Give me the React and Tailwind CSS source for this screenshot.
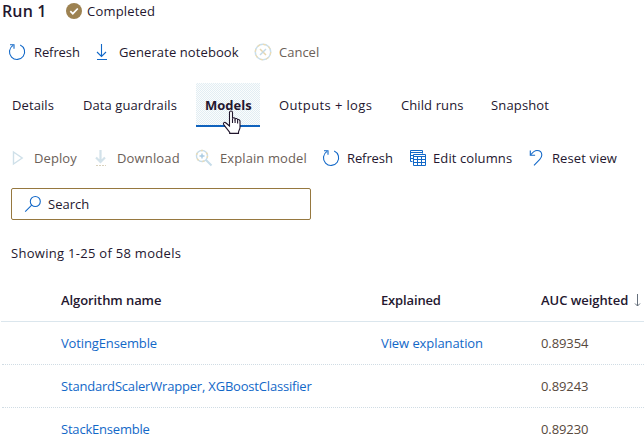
import React from "react";

function RefreshIcon() {
  return (
    <svg width="18" height="18" viewBox="0 0 18 18" fill="none" stroke="#1268c8" strokeWidth="1.1">
      <path d="M12.200 1.900A7.600 7.600 0 1 1 5 2.400" />
      <path d="M2 1.700h4v4" />
    </svg>
  );
}

function DownIcon() {
  return (
    <svg width="14" height="18" viewBox="0 0 14 18" fill="none" stroke="#1268c8" strokeWidth="1.1">
      <path d="M6.500 1v12.500M2 9l4.500 4.500L11 9" />
      <path d="M2 16.500h10" strokeWidth="1" />
    </svg>
  );
}

function DisabledDownIcon() {
  return (
    <svg width="14" height="18" viewBox="0 0 14 18" fill="none" stroke="#d3e2ea">
      <path d="M6.500 1v12M2 8.500l4.500 4.500L11 8.500" strokeWidth="2.200" />
      <path d="M2 16.500h10" stroke="#d9d2bd" strokeDasharray="2 1" />
    </svg>
  );
}

function CancelIcon() {
  return (
    <svg width="18" height="18" viewBox="0 0 18 18" fill="none">
      <circle cx="9" cy="9" r="7.7" stroke="#c9dfec" strokeWidth="1.5" />
      <circle cx="9" cy="9" r="7.7" stroke="#ecdcb4" strokeWidth="1.2" strokeDasharray="3 3" />
      <path d="M6 6l6 6" stroke="#e6d6ae" strokeWidth="1.500" />
      <path d="M12 6l-6 6" stroke="#c3d9e6" strokeWidth="1.500" />
    </svg>
  );
}

function PlayIcon() {
  return (
    <svg width="12" height="16" viewBox="0 0 12 16" fill="none">
      <path d="M1.500 2v12l8.700-6z" stroke="#cfe0e9" strokeWidth="1.400" />
    </svg>
  );
}

function ExplainIcon() {
  return (
    <svg width="18" height="18" viewBox="0 0 18 18" fill="none" stroke="#c6dce9" strokeWidth="1.400">
      <circle cx="7" cy="7" r="5.500" />
      <path d="M11 11l5.500 5.500" strokeWidth="2" />
      <path d="M4.500 7h5M7 4.500v5" stroke="#a9cbe2" />
      <circle cx="7" cy="7" r="5.500" stroke="#ecdcb4" strokeDasharray="2 4" />
    </svg>
  );
}

function ColumnsIcon() {
  return (
    <svg width="18" height="18" viewBox="0 0 18 18" fill="none" stroke="#1268c8" strokeWidth="1">
      <path d="M3.500 12.500h-2v-11h12v3M1 3.500h13M1 6.500h3M1 9.500h3" />
      <path d="M4.500 5.500h12v11h-12zM4 7.500h13M4 10.500h13M4 13.500h13M8.500 7v10M12.500 7v10" />
    </svg>
  );
}

function UndoIcon() {
  return (
    <svg width="14" height="18" viewBox="0 0 14 18" fill="none" stroke="#1268c8" strokeWidth="1.1">
      <path d="M1.300 1.500v4.800h4.800" />
      <path d="M1.600 6C3.500 3.400 5.500 1.500 8 1.500c2.900 0 4.800 2 4.800 4.600 0 1.700-.7 2.900-2 4.200L5 16.300" />
    </svg>
  );
}

function SearchIcon() {
  return (
    <svg width="18" height="18" viewBox="0 0 18 18" fill="none" stroke="#1268c8" strokeWidth="1.1">
      <circle cx="11.300" cy="6.500" r="5" />
      <path d="M7.700 10.200L1.200 16.700" />
    </svg>
  );
}

function HandCursor() {
  return (
    <svg className="absolute left-[26px] top-[27px]" width="20" height="26" viewBox="0 0 20 26">
      <path
        d="M7.500 2.500c0-2 3-2 3 0v6c.5-1.200 2.600-1 2.600.6.600-1 2.500-.7 2.500.9.700-.9 2.400-.4 2.400 1.200v6.200c0 2-1.500 3.200-1.500 5v1H7.700v-1C6.500 20.500 4 17.800 1.800 14.600c-1.200-1.900.7-2.900 2.200-1.600l3.500 3z"
        fill="#fff"
        stroke="#20152c"
        strokeWidth="1.100"
      />
      <path d="M10.500 8.500v4.500M13.100 9.500v3.500M15.600 10.500v3" stroke="#20152c" strokeWidth="1.100" />
    </svg>
  );
}

const models = [
  { name: "VotingEnsemble", spacing: "tracking-[-0.13px]", explained: "View explanation", auc: "0.89354" },
  { name: "StandardScalerWrapper, XGBoostClassifier", spacing: "tracking-[-0.19px]", explained: "", auc: "0.89243" },
  { name: "StackEnsemble", spacing: "tracking-[-0.2px]", explained: "", auc: "0.89230" },
];

export default function App() {
  return (
    <div className="h-[446px] w-[644px] overflow-hidden bg-white font-['Open_Sans','Noto_Sans',sans-serif] text-[13px] leading-5 whitespace-nowrap text-[#24172f]">
      <header className="flex h-[22px] items-center pl-[2px]">
        <h1 className="w-[64px] text-[16px] font-semibold tracking-[0.15px]">Run 1</h1>
        <svg className="mr-[5px]" width="16" height="16" viewBox="0 0 16 16">
          <circle cx="8" cy="8" r="8" fill="#9d8251" />
          <path d="M4.300 8.200l2.500 2.500 5-5.200" fill="none" stroke="#fff" strokeWidth="1.700" />
        </svg>
        <span className="tracking-[0.2px]">Completed</span>
      </header>

      <div className="mt-[20px] grid h-[20px] grid-cols-[26px_61px_24px_135px_25px_1fr] items-center pl-[8px]">
        <RefreshIcon />
        <span className="tracking-[-0.1px]">Refresh</span>
        <DownIcon />
        <span className="tracking-[0.1px]">Generate notebook</span>
        <CancelIcon />
        <span className="text-[#6b6058]">Cancel</span>
      </div>

      <nav className="mt-[21px] grid h-[44px] grid-cols-[71px_113px_64px_19px_122px_90px_1fr] items-center pl-[12px]">
        <span className="tracking-[0.1px]">Details</span>
        <span className="tracking-[0.08px]">Data guardrails</span>
        <div className="relative flex h-full items-center border-b-2 border-[#0f62bd] bg-[#eff5f8] bg-[repeating-conic-gradient(#e2edf3_0_25%,#fbfdfd_0_50%)] bg-[length:2px_2px] pl-[9px] font-bold">
          <span className="pt-[2px]">Models</span>
          <HandCursor />
        </div>
        <span />
        <span className="tracking-[0.38px]">Outputs + logs</span>
        <span className="tracking-[0.1px]">Child runs</span>
        <span className="tracking-[0.15px]">Snapshot</span>
      </nav>

      <div className="mt-[21px] grid h-[20px] grid-cols-[22px_60px_23px_78px_25px_102px_25px_62px_24px_96px_23px_1fr] items-center pl-[12px]">
        <PlayIcon />
        <span className="tracking-[0.1px] text-[#6b6058]">Deploy</span>
        <DisabledDownIcon />
        <span className="tracking-[0.15px] text-[#6b6058]">Download</span>
        <ExplainIcon />
        <span className="tracking-[0.1px] text-[#6b6058]">Explain model</span>
        <RefreshIcon />
        <span className="tracking-[-0.1px]">Refresh</span>
        <ColumnsIcon />
        <span className="tracking-[0.1px]">Edit columns</span>
        <UndoIcon />
        <span className="tracking-[0.1px]">Reset view</span>
      </div>

      <div className="mt-[20px] ml-[11px] flex h-[32px] w-[300px] items-center rounded-[2px] border border-[#96783f] pl-[12px]">
        <SearchIcon />
        <span className="ml-[6px]">Search</span>
      </div>

      <p className="mt-[23px] ml-[11px] h-[20px] tracking-[0.29px]">Showing 1-25 of 58 models</p>

      <div className="ml-[1px]">
        <div className="mt-[16px] grid h-[43px] grid-cols-[320px_160px_1fr] items-center border-b border-[#dbe6ed] pl-[60px] font-semibold">
          <span className="tracking-[-0.08px]">Algorithm name</span>
          <span className="tracking-[-0.15px]">Explained</span>
          <div className="flex items-center">
            <span className="w-[93px] tracking-[-0.05px]">AUC weighted</span>
            <svg width="8" height="14" viewBox="0 0 8 14" fill="none" stroke="#66707c">
              <path d="M3.500 1v12M1 10.500L3.500 13 6 10.500" />
            </svg>
          </div>
        </div>
        {models.map((m) => (
          <div
            key={m.name}
            className="ml-[1px] grid h-[43px] grid-cols-[320px_160px_1fr] items-center border-b border-dotted border-[#d0dce4] pl-[59px] text-[#1268c8]"
          >
            <span className={m.spacing}>{m.name}</span>
            <span className="tracking-[-0.08px]">{m.explained}</span>
            <span className="tracking-[-0.1px] text-[#57493c]">{m.auc}</span>
          </div>
        ))}
      </div>
    </div>
  );
}
